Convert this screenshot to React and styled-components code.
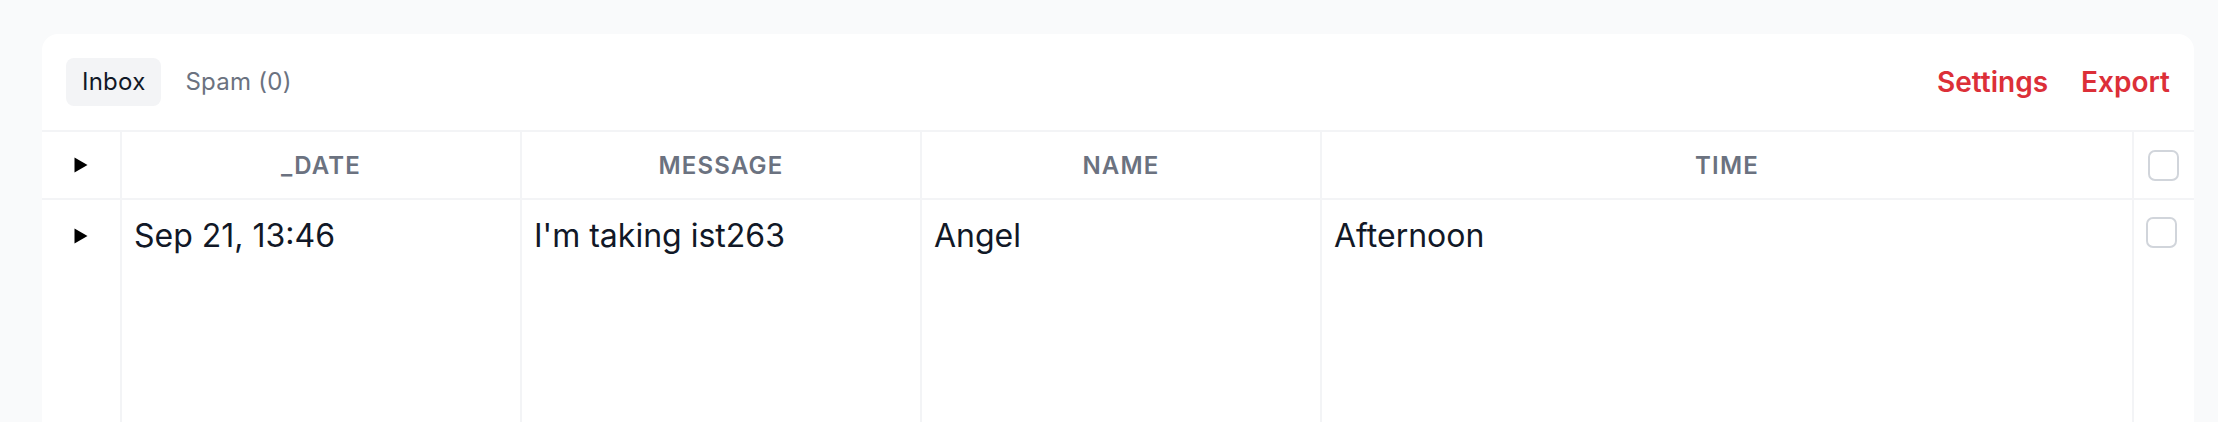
import React from "react";
import styled, { createGlobalStyle } from "styled-components";

const GlobalStyle = createGlobalStyle`
  html, body {
    margin: 0;
    padding: 0;
    background: #f9fafb;
    font-family: Inter, "Noto Sans", "Liberation Sans", sans-serif;
    -webkit-font-smoothing: antialiased;
  }
  * { box-sizing: border-box; }
`;

const Page = styled.div`
  padding: 34px 24px 0 42px;
  min-height: 422px;
`;

const Card = styled.div`
  background: #ffffff;
  border-radius: 16px 16px 0 0;
  min-height: 420px;
  overflow: hidden;
  display: flex;
  flex-direction: column;
`;

const Toolbar = styled.div`
  display: flex;
  align-items: center;
  justify-content: space-between;
  padding: 24px;
`;

const Tabs = styled.div`
  display: flex;
  gap: 8px;
`;

const Tab = styled.button`
  border: none;
  font-family: inherit;
  font-size: 24px;
  line-height: 32px;
  padding: 8px 16px;
  letter-spacing: 0.01em;
  border-radius: 8px;
  cursor: pointer;
  background: ${(p) => (p.$active ? "#f3f4f6" : "transparent")};
  color: ${(p) => (p.$active ? "#111827" : "#6b7280")};
`;

const Actions = styled.div`
  display: flex;
  gap: 33px;
`;

const ActionLink = styled.button`
  border: none;
  background: none;
  padding: 0;
  font-family: inherit;
  font-size: 28px;
  line-height: 36px;
  font-weight: 600;
  color: #dc2f38;
  cursor: pointer;
`;

const Row = styled.div`
  display: grid;
  grid-template-columns: 78px 400px 400px 400px 1fr 62px;
  border-top: ${(p) => (p.$header ? "2px solid #f3f4f6" : "none")};
  border-bottom: ${(p) => (p.$header ? "2px solid #f3f4f6" : "none")};
  flex: ${(p) => (p.$header ? "none" : "1")};
`;

const HeadCell = styled.div`
  height: 66px;
  display: flex;
  align-items: center;
  justify-content: center;
  border-left: ${(p) => (p.$first ? "none" : "2px solid #f3f4f6")};
  font-size: 24px;
  font-weight: 600;
  letter-spacing: 0.05em;
  text-transform: uppercase;
  color: #6b7280;
`;

const Cell = styled.div`
  padding: 12px;
  border-left: 2px solid #f3f4f6;
  font-size: 32px;
  line-height: 48px;
  color: #111827;
  white-space: nowrap;
`;

const ToggleCell = styled.div`
  padding-top: 12px;
  height: 60px;
  display: flex;
  align-items: center;
  justify-content: center;
  align-self: start;
`;

const CheckCell = styled.div`
  border-left: 2px solid #f3f4f6;
  display: flex;
  align-items: ${(p) => (p.$header ? "center" : "flex-start")};
  padding-left: ${(p) => (p.$header ? "14px" : "12px")};
  padding-top: ${(p) => (p.$header ? "0" : "17px")};
`;

const Checkbox = styled.span`
  display: block;
  width: 31px;
  height: 31px;
  border: 2px solid #d1d5db;
  border-radius: 7px;
  background: #fff;
`;

const Caret = () => (
  <svg width="14" height="16" viewBox="0 0 14 16" aria-hidden="true">
    <polygon points="0.5,0.5 13.5,8 0.5,15.5" fill="#000" />
  </svg>
);

const columns = ["_date", "message", "name", "time"];
const rows = [
  { _date: "Sep 21, 13:46", message: "I'm taking ist263", name: "Angel", time: "Afternoon" },
];

export default function App() {
  return (
    <>
      <GlobalStyle />
      <Page>
        <Card>
          <Toolbar>
            <Tabs>
              <Tab $active>Inbox</Tab>
              <Tab>Spam (0)</Tab>
            </Tabs>
            <Actions>
              <ActionLink>Settings</ActionLink>
              <ActionLink>Export</ActionLink>
            </Actions>
          </Toolbar>
          <Row $header>
            <HeadCell $first>
              <Caret />
            </HeadCell>
            {columns.map((c) => (
              <HeadCell key={c}>{c}</HeadCell>
            ))}
            <CheckCell $header>
              <Checkbox />
            </CheckCell>
          </Row>
          {rows.map((r, i) => (
            <Row key={i}>
              <ToggleCell>
                <Caret />
              </ToggleCell>
              {columns.map((c) => (
                <Cell key={c}>{r[c]}</Cell>
              ))}
              <CheckCell>
                <Checkbox />
              </CheckCell>
            </Row>
          ))}
        </Card>
      </Page>
    </>
  );
}
